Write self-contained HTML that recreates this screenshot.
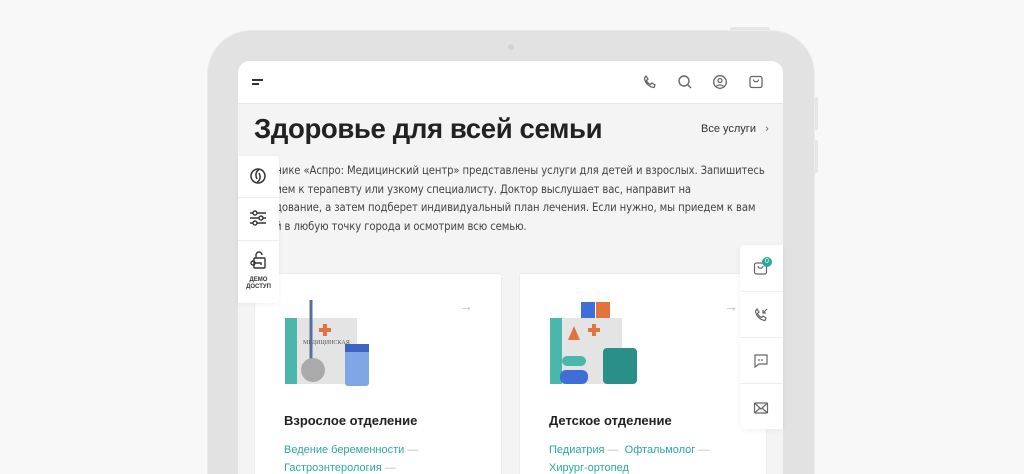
<!DOCTYPE html>
<html style="width:1024px;height:474px;overflow:hidden"><head><meta charset="utf-8"><style>
*{margin:0;padding:0;box-sizing:border-box}
body{width:1024px;height:474px;overflow:hidden;background:#f8f8f8;font-family:"Liberation Sans",sans-serif;position:relative}
.abs{position:absolute}
.frame{left:207px;top:30px;width:608px;height:444px;background:#e2e2e2;border-radius:44px 44px 0 0;border:1px solid #ececec;border-bottom:none}
.screen{left:238px;top:61px;width:545px;height:413px;background:#f4f4f4;border-radius:12px 12px 0 0;overflow:hidden}
.hdr{left:0;top:0;width:545px;height:43px;background:#fff;border-bottom:1px solid #e6e6e6}
h1{position:absolute;left:16px;top:52px;font-size:27.6px;font-weight:bold;color:#222;letter-spacing:-0.4px;white-space:nowrap}
.all{left:463px;top:62px;font-size:11px;color:#333}
.p{left:0;top:101px;width:530px;font-size:11.2px;line-height:18.5px;color:#444;font-family:"DejaVu Sans Condensed","Liberation Sans",sans-serif;white-space:nowrap;letter-spacing:-0.1px}
.card{background:#fff;border:1px solid #ececec;border-radius:3px}
.ttl{font-size:13px;font-weight:bold;color:#222}
.lnk{font-size:11px;color:#2aa8a0;line-height:18px;white-space:nowrap}
.lnk span{color:#bbb}
.side{background:#fff;box-shadow:0 1px 6px rgba(0,0,0,.06)}
</style></head><body>
<div class="abs" style="left:730px;top:27px;width:40px;height:4px;background:#e6e6e6;border-radius:2px"></div>
<div class="abs" style="left:814px;top:97px;width:4px;height:33px;background:#e6e6e6;border-radius:2px"></div>
<div class="abs" style="left:814px;top:140px;width:4px;height:33px;background:#e6e6e6;border-radius:2px"></div>
<div class="abs frame"></div>
<div class="abs" style="left:508px;top:44px;width:6px;height:6px;border-radius:50%;background:#d2d2d2"></div>
<div class="abs screen">
 <div class="abs hdr">
  <div class="abs" style="left:14px;top:18px;width:11px;height:2px;background:#333"></div>
  <div class="abs" style="left:14px;top:22px;width:7px;height:2px;background:#333"></div>
  <svg class="abs" style="left:404px;top:13px" width="16" height="16" viewBox="0 0 16 16" fill="none" stroke="#666" stroke-width="1.3"><path d="M4 2l2 3-1.5 1.5c.8 2 2 3.2 4 4L10 9l3 2-1 2.5C7 13 3 9 2.5 4z"/></svg>
  <svg class="abs" style="left:439px;top:13px" width="16" height="16" viewBox="0 0 16 16" fill="none" stroke="#666" stroke-width="1.4"><circle cx="7" cy="7" r="5"/><path d="M11 11l3 3"/></svg>
  <svg class="abs" style="left:474px;top:13px" width="16" height="16" viewBox="0 0 16 16" fill="none" stroke="#666" stroke-width="1.3"><circle cx="8" cy="8" r="6.3"/><circle cx="8" cy="6.5" r="2"/><path d="M4.5 12.5c1-2 5.5-2 7 0"/></svg>
  <svg class="abs" style="left:510px;top:13px" width="16" height="16" viewBox="0 0 16 16" fill="none" stroke="#666" stroke-width="1.3"><rect x="2" y="2.5" width="12" height="11" rx="2"/><path d="M5.5 5.5c0 3 5 3 5 0"/></svg>
 </div>
 <h1>Здоровье для всей семьи</h1>
 <div class="abs all">Все услуги &nbsp;&nbsp;<span style="color:#666">›</span></div>
 <div class="abs p">&nbsp;&nbsp;&nbsp;&nbsp;&nbsp;&nbsp;&nbsp;&nbsp;&nbsp;&nbsp;инике «Аспро: Медицинский центр» представлены услуги для детей и взрослых. Запишитесь<br>&nbsp;&nbsp;&nbsp;&nbsp;&nbsp;&nbsp;&nbsp;&nbsp;&nbsp;&nbsp;рием к терапевту или узкому специалисту. Доктор выслушает вас, направит на<br>&nbsp;&nbsp;&nbsp;&nbsp;&nbsp;&nbsp;&nbsp;&nbsp;&nbsp;&nbsp;едование, а затем подберет индивидуальный план лечения. Если нужно, мы приедем к вам<br>&nbsp;&nbsp;&nbsp;&nbsp;&nbsp;&nbsp;&nbsp;&nbsp;&nbsp;&nbsp;ой в любую точку города и осмотрим всю семью.</div>
 <div class="abs card" style="left:16px;top:212px;width:248px;height:230px">
  <div class="abs" style="left:204px;top:24px;color:#bbb;font-size:14px">→</div>
  <svg class="abs" style="left:28px;top:26px" width="90" height="90" viewBox="0 0 90 90">
   <rect x="2" y="18" width="20" height="66" fill="#4bb7ab"/>
   <rect x="14" y="18" width="60" height="66" fill="#e4e4e4"/>
   <path d="M40 24h4v4h4v4h-4v4h-4v-4h-4v-4h4z" fill="#e2733e"/>
   <text x="20" y="44" font-size="6" fill="#555" font-family="Liberation Serif">МЕДИЦИНСКАЯ</text>
   <path d="M28 0v60" stroke="#5a6da0" stroke-width="3" fill="none"/>
   <circle cx="30" cy="70" r="12" fill="#aaa"/>
   <rect x="62" y="44" width="24" height="42" rx="3" fill="#7fa7e6"/>
   <rect x="62" y="44" width="24" height="8" fill="#3f63c5"/>
  </svg>
  <div class="abs ttl" style="left:29px;top:139px">Взрослое отделение</div>
  <div class="abs lnk" style="left:29px;top:167px">Ведение беременности <span>—</span><br>Гастроэнтерология <span>—</span></div>
 </div>
 <div class="abs card" style="left:281px;top:212px;width:248px;height:230px">
  <div class="abs" style="left:204px;top:24px;color:#bbb;font-size:14px">→</div>
  <svg class="abs" style="left:28px;top:26px" width="90" height="90" viewBox="0 0 90 90">
   <rect x="33" y="2" width="14" height="16" fill="#3e6fd6"/><rect x="48" y="2" width="14" height="16" fill="#e2733e"/>
   <rect x="2" y="18" width="20" height="66" fill="#4bb7ab"/>
   <rect x="14" y="18" width="60" height="66" fill="#e4e4e4"/>
   <path d="M44 24h4v4h4v4h-4v4h-4v-4h-4v-4h4z" fill="#e2733e"/>
   <path d="M20 40l6-14 6 14z" fill="#e2733e"/><rect x="14" y="56" width="24" height="10" rx="5" fill="#4bb7ab"/><rect x="12" y="70" width="28" height="14" rx="6" fill="#3e6fd6"/>
   <rect x="55" y="48" width="34" height="36" rx="4" fill="#2a8f86"/>
  </svg>
  <div class="abs ttl" style="left:29px;top:139px">Детское отделение</div>
  <div class="abs lnk" style="left:29px;top:167px">Педиатрия <span>—</span> &nbsp;Офтальмолог <span>—</span><br>Хирург-ортопед</div>
 </div>
</div>
<div class="abs side" style="left:238px;top:156px;width:41px;height:147px;border-radius:0 4px 4px 0">
 <svg class="abs" style="left:11px;top:11px" width="18" height="18" viewBox="0 0 18 18" fill="none" stroke="#333" stroke-width="1.5"><circle cx="9" cy="9" r="7"/><path d="M10 3c-3 1-4 5-2 9M8 15c3-1 4-5 2-9"/></svg>
 <div class="abs" style="left:0;top:41px;width:41px;height:1px;background:#eee"></div>
 <svg class="abs" style="left:11px;top:53px" width="18" height="18" viewBox="0 0 18 18" fill="none" stroke="#333" stroke-width="1.4"><path d="M1 4h16M1 9h16M1 14h16"/><circle cx="6" cy="4" r="2" fill="#fff"/><circle cx="12" cy="9" r="2" fill="#fff"/><circle cx="6" cy="14" r="2" fill="#fff"/></svg>
 <div class="abs" style="left:0;top:84px;width:41px;height:1px;background:#eee"></div>
 <svg class="abs" style="left:11px;top:95px" width="18" height="18" viewBox="0 0 18 18" fill="none" stroke="#333" stroke-width="1.4"><rect x="5" y="7" width="11" height="10" rx="1"/><path d="M7 7V4a3 3 0 016 0"/><circle cx="4" cy="12" r="2"/><path d="M6 12h6v2"/></svg>
 <div class="abs" style="left:0;top:121px;width:41px;text-align:center;font-size:6px;font-weight:bold;color:#333;line-height:7px">ДЕМО<br>ДОСТУП</div>
</div>
<div class="abs side" style="left:740px;top:245px;width:43px;height:184px;border-radius:4px 0 0 4px">
 <svg class="abs" style="left:13px;top:15px" width="16" height="16" viewBox="0 0 16 16" fill="none" stroke="#666" stroke-width="1.2"><rect x="1.5" y="3" width="12" height="11" rx="2"/><path d="M5 6c0 3 5 3 5 0"/></svg>
 <div class="abs" style="left:22px;top:12px;width:10px;height:10px;border-radius:50%;background:#2aa8a0;color:#fff;font-size:7px;text-align:center;line-height:10px">0</div>
 <div class="abs" style="left:0;top:46px;width:43px;height:1px;background:#eee"></div>
 <svg class="abs" style="left:13px;top:62px" width="16" height="16" viewBox="0 0 16 16" fill="none" stroke="#666" stroke-width="1.2"><path d="M4 2l2 3-1.5 1.5c.8 2 2 3.2 4 4L10 9l3 2-1 2.5C7 13 3 9 2.5 4zM14 2l-4 4M10 3v3h3"/></svg>
 <div class="abs" style="left:0;top:92px;width:43px;height:1px;background:#eee"></div>
 <svg class="abs" style="left:13px;top:108px" width="16" height="16" viewBox="0 0 16 16" fill="none" stroke="#666" stroke-width="1.2"><path d="M2 2h12v9H6l-4 3z"/><path d="M6 6v2M9 6v2"/></svg>
 <div class="abs" style="left:0;top:138px;width:43px;height:1px;background:#eee"></div>
 <svg class="abs" style="left:13px;top:155px" width="16" height="16" viewBox="0 0 16 16" fill="none" stroke="#666" stroke-width="1.2"><rect x="1.5" y="3" width="13" height="10" rx="1"/><path d="M1.5 3l6.5 6 6.5-6M1.5 13l5-4.5M14.5 13l-5-4.5"/></svg>
</div>
</body></html>
